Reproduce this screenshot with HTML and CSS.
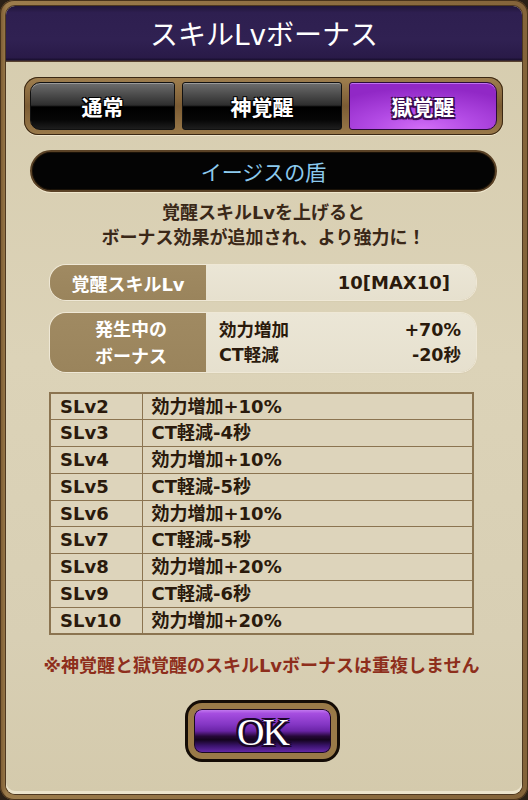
FILE: index.html
```html
<!DOCTYPE html>
<html lang="ja">
<head>
<meta charset="utf-8">
<title>スキルLvボーナス</title>
<link rel="stylesheet" href="styles.css">
</head>
<body>
<div class="dialog">
  <div class="panel">
    <header class="title-bar"><h1>スキルLvボーナス</h1></header>
    <main class="content">
      <nav class="tabs">
        <div class="tab tab-first">通常</div>
        <div class="tab tab-mid">神覚醒</div>
        <div class="tab tab-last active">獄覚醒</div>
      </nav>
      <div class="name-bar">イージスの盾</div>
      <p class="desc">覚醒スキルLvを上げると<br>ボーナス効果が追加され、より強力に！</p>
      <div class="info-row row-level">
        <div class="info-label">覚醒スキルLv</div>
        <div class="info-value level-value">10[MAX10]</div>
      </div>
      <div class="info-row row-bonus">
        <div class="info-label bonus-label">発生中の<br>ボーナス</div>
        <div class="info-value bonus-list">
          <div class="bonus-line"><span>効力増加</span><span>+70%</span></div>
          <div class="bonus-line"><span>CT軽減</span><span>-20秒</span></div>
        </div>
      </div>
      <table class="bonus-table">
        <tr><td class="lv">SLv2</td><td>効力増加+10%</td></tr>
        <tr><td class="lv">SLv3</td><td>CT軽減-4秒</td></tr>
        <tr><td class="lv">SLv4</td><td>効力増加+10%</td></tr>
        <tr><td class="lv">SLv5</td><td>CT軽減-5秒</td></tr>
        <tr><td class="lv">SLv6</td><td>効力増加+10%</td></tr>
        <tr><td class="lv">SLv7</td><td>CT軽減-5秒</td></tr>
        <tr><td class="lv">SLv8</td><td>効力増加+20%</td></tr>
        <tr><td class="lv">SLv9</td><td>CT軽減-6秒</td></tr>
        <tr><td class="lv">SLv10</td><td>効力増加+20%</td></tr>
      </table>
      <p class="note">※神覚醒と獄覚醒のスキルLvボーナスは重複しません</p>
      <div class="ok-wrap">
        <button class="ok-btn"><span class="ok-inner">OK</span></button>
      </div>
    </main>
  </div>
</div>
</body>
</html>
```

FILE: styles.css
```css
* { box-sizing: border-box; margin: 0; padding: 0; }

html, body { width: 528px; height: 800px; }

body {
  background: #2a2016;
  font-family: "DejaVu Sans", "Noto Sans CJK JP", sans-serif;
  overflow: hidden;
}

.dialog {
  width: 528px;
  height: 800px;
  padding: 6px;
  border-radius: 14px;
  background: linear-gradient(90deg, #7a5a32 0%, #9c7c4c 1.2%, #84643a 100%);
  box-shadow: inset 0 0 0 1px #4a341c;
}

.panel {
  height: 100%;
  border-radius: 9px;
  overflow: hidden;
  display: flex;
  flex-direction: column;
  background: linear-gradient(180deg, #d6ccae 0%, #dcd3b8 45%, #d8cfb4 80%, #d4caac 100%);
  box-shadow: 0 0 0 1px #4e3820, inset 0 -3px 0 #ece4cc;
}

.title-bar {
  height: 56px;
  flex: none;
  background: linear-gradient(180deg, #21163a 0%, #2e1f50 12%, #302152 60%, #291a48 92%, #1a1030 96%, #6a5030 100%);
  display: flex;
  align-items: center;
  justify-content: center;
}

.title-bar h1 {
  color: #ffffff;
  font-size: 28px;
  font-weight: 400;
  margin-top: -2px;
}

.content {
  flex: 1;
  display: flex;
  flex-direction: column;
  padding: 0 19px 0 18px;
}

/* Tabs */
.tabs {
  margin-top: 15px;
  height: 58px;
  display: flex;
  gap: 7px;
  padding: 5px 6px;
  border-radius: 14px;
  background: linear-gradient(180deg, #a08050 0%, #7c5c34 50%, #9a7a4a 100%);
  box-shadow: inset 0 0 0 1px #3a2814, 0 1px 0 #efe6cc;
}

.tab {
  display: flex;
  align-items: center;
  justify-content: center;
  color: #ffffff;
  font-size: 21px;
  font-weight: 700;
  border: 1px solid #111;
  background: linear-gradient(180deg, #6e6e6e 0%, #4c4c4c 25%, #2e2e2e 48%, #000000 52%, #060606 80%, #1e1e1e 100%);
  box-shadow: inset 0 1px 0 #9a9a9a;
  text-shadow: -1px -1px 0 #000, 1px -1px 0 #000, -1px 1px 0 #000, 1px 1px 0 #000, 0 2px 1px #000;
}

.tab-first { width: 145px; border-radius: 10px 3px 3px 10px; }
.tab-mid { width: 160px; border-radius: 3px; }
.tab-last { width: 148px; border-radius: 3px 10px 10px 3px; }

.tab.active {
  background: radial-gradient(ellipse 80% 90% at 50% 100%, #d26ef6 0%, #b24ae4 45%, #9128c6 100%);
  box-shadow: inset 0 1px 0 #c070f0;
  border-color: #2a0a3a;
  text-shadow: -1.5px -1.5px 0 #3a0c50, 1.5px -1.5px 0 #3a0c50, -1.5px 1.5px 0 #3a0c50, 1.5px 1.5px 0 #3a0c50, 0 2px 1px #3a0c50;
}

/* Name bar */
.name-bar {
  margin: 15px 6px 0 6px;
  height: 42px;
  border-radius: 21px;
  background: #040404;
  border: 2px solid #5a4226;
  box-shadow: 0 1px 0 #efe6cc, inset 0 0 0 1px #1a1208;
  color: #8ccaee;
  font-size: 21px;
  font-weight: 400;
  display: flex;
  align-items: center;
  justify-content: center;
}

/* Description */
.desc {
  margin-top: 8px;
  text-align: center;
  font-size: 18px;
  line-height: 25px;
  font-weight: 700;
  color: #3a2818;
}

/* Info rows */
.info-row {
  display: flex;
  margin: 0 27px 0 26px;
  border-radius: 16px;
  overflow: hidden;
  box-shadow: 0 0 0 1px #efe8d6, 0 1px 1px #b8aa88;
}

.row-level { margin-top: 15px; height: 35px; }
.row-bonus { margin-top: 13px; height: 59px; }

.info-label {
  width: 156px;
  flex: none;
  background: linear-gradient(180deg, #a08a62 0%, #9a845c 100%);
  color: #ffffff;
  font-size: 18px;
  font-weight: 700;
  display: flex;
  align-items: center;
  justify-content: center;
  text-align: center;
}

.bonus-label {
  line-height: 27px;
  padding-left: 6px;
}

.info-value {
  flex: 1;
  background: linear-gradient(180deg, #ebe6d6 0%, #e6e0ce 100%);
  color: #2a1a0c;
  font-size: 18px;
  font-weight: 700;
}

.level-value {
  display: flex;
  align-items: center;
  justify-content: flex-end;
  padding-right: 26px;
}

.bonus-list {
  display: flex;
  flex-direction: column;
  justify-content: center;
  padding: 0 15px 0 13px;
  font-size: 17.5px;
  line-height: 25px;
}

.bonus-line {
  display: flex;
  justify-content: space-between;
}

/* Table */
.bonus-table {
  margin: 20px 29px 0 25px;
  width: 425px;
  border-collapse: collapse;
  border: 2px solid #8b7450;
  background: #ddd4bb;
  color: #2a1a0c;
  font-size: 18px;
  font-weight: 700;
}

.bonus-table td {
  border: 1px solid #8b7450;
  height: 26.8px;
  padding: 0 0 0 9px;
  line-height: 24px;
  vertical-align: middle;
}

.bonus-table td.lv {
  width: 92px;
}

/* Note */
.note {
  margin-top: 19px;
  text-align: center;
  font-size: 18px;
  line-height: 24px;
  font-weight: 700;
  color: #8e2e1c;
  white-space: nowrap;
  margin-left: -4px;
}

/* OK button */
.ok-wrap {
  margin-top: 22px;
  display: flex;
  justify-content: center;
}

.ok-btn {
  width: 155px;
  height: 62px;
  border: none;
  border-radius: 17px;
  padding: 3px;
  background: #140c06;
  margin-left: -2px;
  cursor: pointer;
}

.ok-inner {
  display: flex;
  align-items: center;
  justify-content: center;
  height: 100%;
  border-radius: 14px;
  border: 6px solid #9a7a48;
  box-shadow: inset 0 0 0 1px #1a0a20;
  background: linear-gradient(180deg, #c884f2 0%, #a64ee0 10%, #8436c4 35%, #6a24a6 50%, #260838 62%, #14041e 70%, #3c1470 84%, #6a2cae 100%);
  color: #ffffff;
  font-family: "Liberation Serif", "DejaVu Serif", serif;
  font-size: 38px;
  letter-spacing: -2px;
  padding-top: 2px;
  text-shadow: -2px -2px 0 #1a0628, 2px -2px 0 #1a0628, -2px 2px 0 #1a0628, 2px 2px 0 #1a0628, 0 2px 0 #1a0628, 2px 0 0 #1a0628, -2px 0 0 #1a0628, 0 -2px 0 #1a0628;
}
```
